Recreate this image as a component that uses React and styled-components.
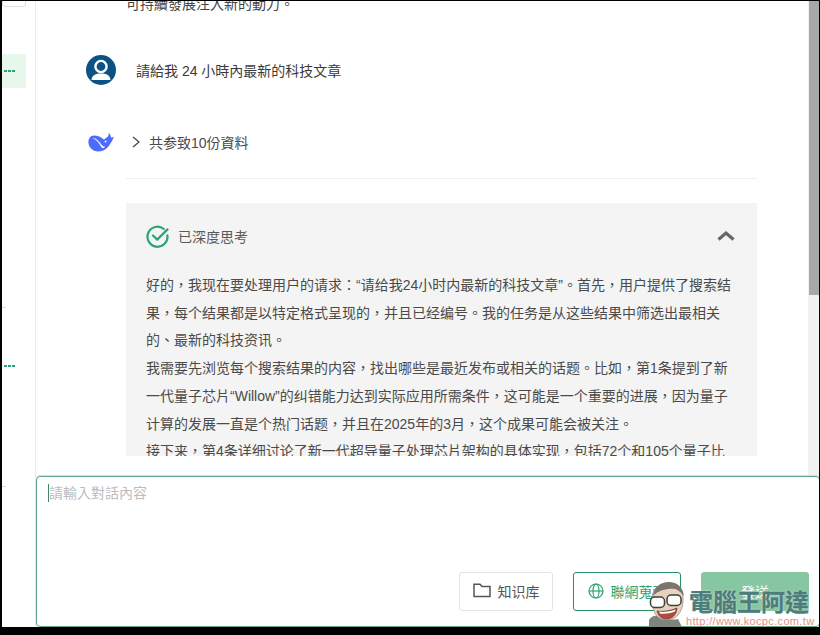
import React from 'react';
import styled, { createGlobalStyle } from 'styled-components';

const Global = createGlobalStyle`
  html, body { margin: 0; padding: 0; background: #000; }
  body { width: 820px; height: 635px; overflow: hidden; font-family: "Liberation Sans", "Noto Sans CJK TC", sans-serif; }
  * { box-sizing: border-box; }
`;

const Frame = styled.div`
  width: 820px; height: 635px;
  padding: 1px 1px 8px 2px;
  display: flex;
  position: relative;
`;
const Window = styled.div`
  flex: 1; display: flex; background: #fff; overflow: hidden; min-width: 0;
`;
const Sidebar = styled.aside`
  width: 34px; flex: none; border-right: 1px solid #e8ecec;
  display: flex; flex-direction: column; padding-right: 9px;
`;
const SideStub = styled.div`
  height: 6px; border: 1px solid #e2e2e2; border-top: 0; border-radius: 0 0 3px 3px;
`;
const SideItem = styled.div`
  height: 34px; margin-top: ${p => p.$top}px;
  background: ${p => (p.$active ? '#e8f7ec' : 'transparent')};
  display: flex; align-items: center; padding-left: 2px; gap: 1.5px;
`;
const Dot = styled.i`
  width: 2.5px; height: 2.5px; background: #2ba471; display: block;
`;
const SideTick = styled.div`
  width: 4px; height: 1px; background: #ddd; margin-top: ${p => p.$top}px;
`;
const Main = styled.main`
  flex: 1; min-width: 0; display: flex; flex-direction: column;
`;
const Upper = styled.div`
  height: 475px; display: flex; overflow: hidden;
`;
const Feed = styled.div`
  flex: 1; min-width: 0; padding: 0 51px 20px 50px;
  display: flex; flex-direction: column; justify-content: flex-end;
  overflow: hidden;
`;
const Scrollbar = styled.div`
  width: 11px; flex: none; background: #f1f1f1; padding-left: 1px;
`;
const Thumb = styled.div`
  height: 294px; background: #a8a8a8;
`;
const CutText = styled.p`
  margin: 0 0 41px 40px; font-size: 14px; line-height: 20px; color: #444;
  height: 20px; flex: none;
`;
const UserRow = styled.div`
  display: flex; align-items: center; height: 30px; flex: none; gap: 20px;
  font-size: 14px; color: #3a3a3a;
`;
const BotRow = styled.div`
  display: flex; align-items: center; height: 24px; margin-top: 45px; flex: none;
  font-size: 14px; color: #4a4a4a;
`;
const Whale = styled.svg`
  width: 27px; height: 20px; flex: none; margin-left: 2px;
`;
const Chevron = styled.svg`
  width: 10px; height: 14px; margin-left: 16px; margin-right: 8px; flex: none;
`;
const Answer = styled.div`
  margin-left: 40px; flex: none;
`;
const Divider = styled.hr`
  border: 0; height: 1px; background: #efefef; margin: 24px 0 24px;
`;
const Think = styled.section`
  height: 253px; background: #f4f4f4; padding: 0 20px; overflow: hidden;
`;
const ThinkHead = styled.header`
  height: 66px; display: flex; align-items: center; gap: 9px;
  font-size: 14px; color: #5a5a5a;
`;
const ThinkUp = styled.svg`
  width: 20px; height: 12px; margin-left: auto; margin-right: 1px;
`;
const ThinkBody = styled.div`
  font-size: 14px; line-height: 27.7px; color: #4a4a4a; margin-top: 3px;
`;
const Line = styled.div`
  white-space: nowrap;
`;
const Composer = styled.div`
  height: 151px; border: 1px solid #5fa584; border-radius: 4px;
  padding: 7px 10px 15px 11px; display: flex; flex-direction: column;
  margin-right: -1px; box-shadow: 0 -1px 1px #cfe5da;
`;
const Placeholder = styled.div`
  font-size: 14px; line-height: 18px; color: #bdbdbd;
  border-left: 1px solid #3f8a66; width: fit-content;
`;
const Actions = styled.div`
  margin-top: auto; display: flex; justify-content: flex-end; gap: 20px;
`;
const Btn = styled.button`
  width: ${p => p.$w}px; height: 39px; border-radius: 3px; font: inherit; font-size: 14px;
  display: flex; align-items: center; justify-content: center; gap: 7px; padding: 0 0 2px;
  background: ${p => (p.$kind === 'send' ? '#86c6a0' : '#fff')};
  color: ${p => (p.$kind === 'send' ? '#fff' : p.$kind === 'web' ? '#2ba471' : '#555')};
  border: 1px solid ${p => (p.$kind === 'send' ? '#86c6a0' : p.$kind === 'web' ? '#2b8f66' : '#e3e3e3')};
`;
const Watermark = styled.div`
  position: absolute; left: 648px; top: 582px; width: 162px; height: 45px;
  display: flex; pointer-events: none;
`;
const Face = styled.svg`
  width: 38px; height: 45px; flex: none;
`;
const Brand = styled.div`
  display: flex; flex-direction: column; align-items: flex-start; margin-left: 3px; padding-top: 8px; width: 121px;
`;
const BrandName = styled.div`
  font-size: 24px; line-height: 26px; font-weight: 700; color: #4c7d7b;
  -webkit-text-stroke: 0.3px #4c7d7b; text-shadow: 0 0 2px #fff; white-space: nowrap;
`;
const BrandUrl = styled.div`
  font-size: 11px; line-height: 11px; color: #e58f8f; letter-spacing: 0.35px; white-space: nowrap; margin-left: -3px;
`;

const lines = [
  '好的，我现在要处理用户的请求：“请给我24小时内最新的科技文章”。首先，用户提供了搜索结',
  '果，每个结果都是以特定格式呈现的，并且已经编号。我的任务是从这些结果中筛选出最相关',
  '的、最新的科技资讯。',
  '我需要先浏览每个搜索结果的内容，找出哪些是最近发布或相关的话题。比如，第1条提到了新',
  '一代量子芯片“Willow”的纠错能力达到实际应用所需条件，这可能是一个重要的进展，因为量子',
  '计算的发展一直是个热门话题，并且在2025年的3月，这个成果可能会被关注。',
  '接下来，第4条详细讨论了新一代超导量子处理芯片架构的具体实现，包括72个和105个量子比',
];

const Dots = () => (<><Dot /><Dot /><Dot /></>);

export default function App() {
  return (
    <Frame lang="zh-TW">
      <Global />
      <Window>
        <Sidebar>
          <SideStub />
          <SideItem $top={47} $active><Dots /></SideItem>
          <SideTick $top={219} />
          <SideItem $top={41}><Dots /></SideItem>
          <SideTick $top={103} />
        </Sidebar>
        <Main>
          <Upper>
            <Feed>
              <CutText>可持續發展注入新的動力。</CutText>
              <UserRow>
                <svg width="30" height="30" viewBox="0 0 30 30">
                  <circle cx="15" cy="15" r="15" fill="#0b5382" />
                  <circle cx="15" cy="11.5" r="5.6" fill="none" stroke="#fff" strokeWidth="2.4" />
                  <path d="M5.5 25 C6 20 9.5 18.5 15 18.5 C20.5 18.5 24 20 24.5 25 Z" fill="#fff" />
                </svg>
                <span>請給我 24 小時內最新的科技文章</span>
              </UserRow>
              <BotRow>
                <Whale viewBox="0 0 27 20">
                  <path d="M26 4.5 C25 5.4 24 5.6 23 5.4 C23 3.6 22 2 20.4 1 C21 2.8 20.6 4.2 19.4 5 C18 6 17 6.6 16 7.6 C13.6 5.4 11 3.6 6.6 3.4 C2.6 3.2 0.4 6.2 0.4 10 C0.4 15 4.4 19.4 10.4 19.4 C15.6 19.4 19.4 16.4 21.4 13 C23.2 10.6 25 7.6 26 4.5 Z" fill="#4d6bfe" />
                  <path d="M4.6 6 C7.6 7 10.6 10.4 13 14.6 C14.4 16.8 16.4 16.4 17 14.6 C14.4 14.8 12 10.4 9.4 8 C7.8 6.6 6 5.8 4.6 6 Z" fill="#fff" />
                  <circle cx="17.6" cy="9.6" r="1" fill="#fff" />
                </Whale>
                <Chevron viewBox="0 0 10 14">
                  <path d="M2 2 L8 7 L2 12" fill="none" stroke="#444" strokeWidth="1.2" />
                </Chevron>
                <span>共参致10份資料</span>
              </BotRow>
              <Answer>
                <Divider />
                <Think>
                  <ThinkHead>
                    <svg width="23" height="23" viewBox="0 0 23 23">
                      <path d="M17.8 4 A10 10 0 1 0 21.4 10.4" fill="none" stroke="#2aa674" strokeWidth="2.2" strokeLinecap="round" />
                      <path d="M7 10.5 L11.2 14.6 L21.5 4.4" fill="none" stroke="#2aa674" strokeWidth="2.2" strokeLinecap="round" strokeLinejoin="round" />
                    </svg>
                    <span>已深度思考</span>
                    <ThinkUp viewBox="0 0 20 12">
                      <path d="M2.5 9.5 L10 3 L17.5 9.5" fill="none" stroke="#666" strokeWidth="3.2" strokeLinejoin="miter" />
                    </ThinkUp>
                  </ThinkHead>
                  <ThinkBody>
                    {lines.map(l => <Line key={l}>{l}</Line>)}
                  </ThinkBody>
                </Think>
              </Answer>
            </Feed>
            <Scrollbar><Thumb /></Scrollbar>
          </Upper>
          <Composer>
            <Placeholder>請輸入對話內容</Placeholder>
            <Actions>
              <Btn $w={94}>
                <svg width="18" height="15" viewBox="0 0 18 15">
                  <path d="M1 13.6 V1.2 H7 L9 3.6 H17 V13.6 Z" fill="none" stroke="#555" strokeWidth="1.5" />
                </svg>
                知识库
              </Btn>
              <Btn $w={108} $kind="web">
                <svg width="16" height="16" viewBox="0 0 16 16" fill="none" stroke="#2ba471" strokeWidth="1.2">
                  <circle cx="8" cy="8" r="7" />
                  <ellipse cx="8" cy="8" rx="3" ry="7" />
                  <path d="M1 8 H15" />
                </svg>
                聯網蒐索
              </Btn>
              <Btn $w={108} $kind="send">發送</Btn>
            </Actions>
          </Composer>
        </Main>
      </Window>
      <Watermark>
        <Face viewBox="0 0 38 45">
          <path d="M1 45 L1 38 C4 33 8 33 14 35 C20 38 26 38 30 37 L34 45 Z" fill="#7c857e" />
          <path d="M4 20 C3 8 10 1 20 1 C30 1 36 9 35 20 C34 31 28 38 18 38 C9 38 5 30 4 20 Z" fill="#e6d2bd" stroke="#8f8478" strokeWidth="0.7" />
          <path d="M5 14 C6 5 13 0 21 0 C29 0 35 5 36 14 C30 7 27 6 20 7 C13 8 9 10 5 14 Z" fill="#7d746c" />
          <g fill="#fdfdfb" stroke="#3f3f3c" strokeWidth="1.5">
            <rect x="2.5" y="15" width="14" height="10.5" rx="4" />
            <rect x="19" y="13" width="14" height="10.5" rx="4" />
          </g>
          <path d="M9 29 C14 30 23 29 29 26 C28.5 33 24 37 18 37 C13 37 10 33 9 29 Z" fill="#b5483f" stroke="#5a3a34" strokeWidth="0.7" />
          <path d="M11 29.6 C15 30.4 23 29.4 27.6 27.4 L27 29.6 C22 31.6 16 32.2 12 31.6 Z" fill="#fff" />
        </Face>
        <Brand>
          <BrandName>電腦王阿達</BrandName>
          <BrandUrl>http://www.kocpc.com.tw</BrandUrl>
        </Brand>
      </Watermark>
    </Frame>
  );
}
